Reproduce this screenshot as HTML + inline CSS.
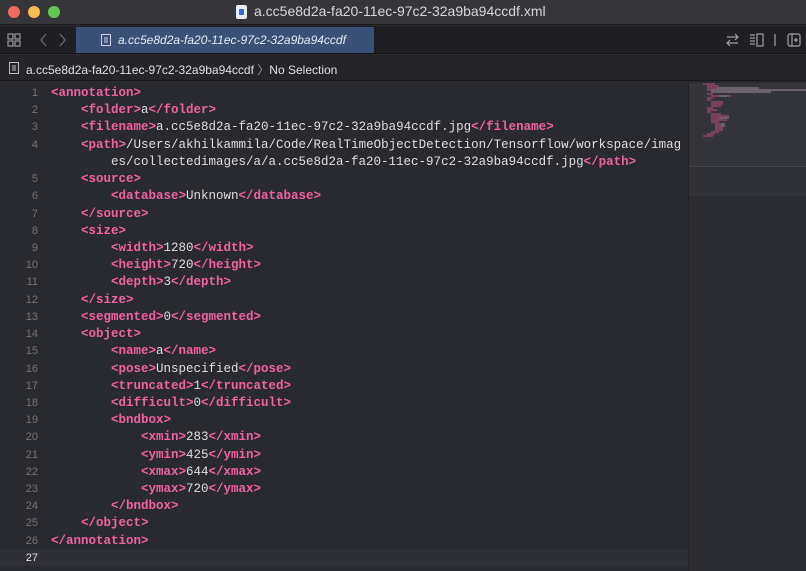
<!DOCTYPE html>
<html><head><meta charset="utf-8"><style>
*{margin:0;padding:0;box-sizing:border-box}
body{width:806px;height:571px;overflow:hidden;background:#292a30;font-family:"Liberation Sans",sans-serif;position:relative}
.title{position:absolute;left:0;top:0;width:806px;height:25px;background:#36363a;border-bottom:1px solid #1b1b1d}
.dot{position:absolute;top:6px;width:12px;height:12px;border-radius:50%}
.ttext{position:absolute;left:254px;top:3px;color:#d8d8d8;font-size:14px}
.tabbar{position:absolute;top:26px;left:0;width:806px;height:28px;background:#1f1f23;border-bottom:1px solid #151517}
.tab{position:absolute;left:76px;top:1px;width:298px;height:26px;background:#3a5076;color:#e6ebf2;font-size:12px;font-style:italic;padding:6px 0 0 42px}
.crumb{position:absolute;top:55px;left:0;width:806px;height:26px;background:#252529;border-bottom:1px solid #18181a;color:#e0e0e0;font-size:12px;padding:6px 0 0 26px}
.editor{position:absolute;top:83px;left:0;width:688px;height:488px;background:#292a30}
.mini{position:absolute;top:83px;left:688px;width:118px;height:488px;background:#2b2c31;border-left:1px solid #222226}
.code{position:absolute;top:0;left:0;font-family:"Liberation Mono",monospace;font-size:12.5px;line-height:17.22px;color:#dfdfe0}
.ln{position:absolute;left:0;width:38px;text-align:right;color:#747478;font-family:"Liberation Sans",sans-serif;font-size:11px}
.t{color:#f062a2;font-weight:bold}
.row{height:17.22px;position:relative}
.row .c{position:absolute;left:51px;white-space:pre}
</style></head><body>
<div class="title">
<div class="dot" style="left:8px;background:#ed6a5e"></div>
<div class="dot" style="left:28px;background:#f5bf4f"></div>
<div class="dot" style="left:48px;background:#61c554"></div>
<div style="position:absolute;left:236px;top:5px;width:11px;height:14px;background:#e8eef8;border-radius:2px"><div style="margin:4px 3px;width:5px;height:6px;background:#2f6fd6"></div></div>
<div class="ttext">a.cc5e8d2a-fa20-11ec-97c2-32a9ba94ccdf.xml</div>
</div>
<div class="tabbar">
<svg style="position:absolute;left:7px;top:7px" width="14" height="14" fill="none" stroke="#9a9a9e" stroke-width="1.2"><rect x="1" y="1" width="5" height="5"/><rect x="8" y="1" width="5" height="5"/><rect x="1" y="8" width="5" height="5"/><rect x="8" y="8" width="5" height="5"/></svg>
<svg style="position:absolute;left:38px;top:7px" width="30" height="14" fill="none" stroke="#6a6a6e" stroke-width="1.3"><path d="M8 1 L3 7 L8 13"/><path d="M22 1 L27 7 L22 13"/></svg>
<div class="tab"><svg style="position:absolute;left:25px;top:7px" width="10" height="12" fill="none" stroke="#c8d0dc" stroke-width="1"><rect x=".5" y=".5" width="9" height="11"/><path d="M3 4h4M3 6h4M3 8h4"/></svg>a.cc5e8d2a-fa20-11ec-97c2-32a9ba94ccdf</div>
<svg style="position:absolute;left:725px;top:7px" width="80" height="14" fill="none" stroke="#a0a0a4" stroke-width="1.2"><path d="M2 4h11M10 1l3 3-3 3M13 10H2M5 7l-3 3 3 3"/><path d="M25 2h5M25 5h5M25 8h5M25 11h5"/><rect x="32" y="1" width="6" height="12"/><path d="M50 1v12"/><rect x="63" y="1" width="12" height="12" rx="2"/><path d="M67 1v12M69 7h4M71 5v4"/></svg>
</div>
<div class="crumb"><svg style="position:absolute;left:9px;top:7px" width="10" height="12" fill="none" stroke="#c0c0c0" stroke-width="1"><rect x=".5" y=".5" width="9" height="11"/><path d="M3 4h4M3 6h4M3 8h4"/></svg>a.cc5e8d2a-fa20-11ec-97c2-32a9ba94ccdf <span style="color:#999">〉</span>No Selection</div>
<div class="editor">
<div style="position:absolute;left:0;top:466px;width:688px;height:17px;background:#2f3037"></div>
<div class="code" style="top:2px;width:688px">
<div class="row"><span class="ln">1</span><span class="c"><span class="t">&lt;annotation&gt;</span></span></div>
<div class="row"><span class="ln">2</span><span class="c">    <span class="t">&lt;folder&gt;</span>a<span class="t">&lt;/folder&gt;</span></span></div>
<div class="row"><span class="ln">3</span><span class="c">    <span class="t">&lt;filename&gt;</span>a.cc5e8d2a-fa20-11ec-97c2-32a9ba94ccdf.jpg<span class="t">&lt;/filename&gt;</span></span></div>
<div class="row"><span class="ln">4</span><span class="c">    <span class="t">&lt;path&gt;</span>/Users/akhilkammila/Code/RealTimeObjectDetection/Tensorflow/workspace/imag</span></div>
<div class="row"><span class="c">        es/collectedimages/a/a.cc5e8d2a-fa20-11ec-97c2-32a9ba94ccdf.jpg<span class="t">&lt;/path&gt;</span></span></div>
<div class="row"><span class="ln">5</span><span class="c">    <span class="t">&lt;source&gt;</span></span></div>
<div class="row"><span class="ln">6</span><span class="c">        <span class="t">&lt;database&gt;</span>Unknown<span class="t">&lt;/database&gt;</span></span></div>
<div class="row"><span class="ln">7</span><span class="c">    <span class="t">&lt;/source&gt;</span></span></div>
<div class="row"><span class="ln">8</span><span class="c">    <span class="t">&lt;size&gt;</span></span></div>
<div class="row"><span class="ln">9</span><span class="c">        <span class="t">&lt;width&gt;</span>1280<span class="t">&lt;/width&gt;</span></span></div>
<div class="row"><span class="ln">10</span><span class="c">        <span class="t">&lt;height&gt;</span>720<span class="t">&lt;/height&gt;</span></span></div>
<div class="row"><span class="ln">11</span><span class="c">        <span class="t">&lt;depth&gt;</span>3<span class="t">&lt;/depth&gt;</span></span></div>
<div class="row"><span class="ln">12</span><span class="c">    <span class="t">&lt;/size&gt;</span></span></div>
<div class="row"><span class="ln">13</span><span class="c">    <span class="t">&lt;segmented&gt;</span>0<span class="t">&lt;/segmented&gt;</span></span></div>
<div class="row"><span class="ln">14</span><span class="c">    <span class="t">&lt;object&gt;</span></span></div>
<div class="row"><span class="ln">15</span><span class="c">        <span class="t">&lt;name&gt;</span>a<span class="t">&lt;/name&gt;</span></span></div>
<div class="row"><span class="ln">16</span><span class="c">        <span class="t">&lt;pose&gt;</span>Unspecified<span class="t">&lt;/pose&gt;</span></span></div>
<div class="row"><span class="ln">17</span><span class="c">        <span class="t">&lt;truncated&gt;</span>1<span class="t">&lt;/truncated&gt;</span></span></div>
<div class="row"><span class="ln">18</span><span class="c">        <span class="t">&lt;difficult&gt;</span>0<span class="t">&lt;/difficult&gt;</span></span></div>
<div class="row"><span class="ln">19</span><span class="c">        <span class="t">&lt;bndbox&gt;</span></span></div>
<div class="row"><span class="ln">20</span><span class="c">            <span class="t">&lt;xmin&gt;</span>283<span class="t">&lt;/xmin&gt;</span></span></div>
<div class="row"><span class="ln">21</span><span class="c">            <span class="t">&lt;ymin&gt;</span>425<span class="t">&lt;/ymin&gt;</span></span></div>
<div class="row"><span class="ln">22</span><span class="c">            <span class="t">&lt;xmax&gt;</span>644<span class="t">&lt;/xmax&gt;</span></span></div>
<div class="row"><span class="ln">23</span><span class="c">            <span class="t">&lt;ymax&gt;</span>720<span class="t">&lt;/ymax&gt;</span></span></div>
<div class="row"><span class="ln">24</span><span class="c">        <span class="t">&lt;/bndbox&gt;</span></span></div>
<div class="row"><span class="ln">25</span><span class="c">    <span class="t">&lt;/object&gt;</span></span></div>
<div class="row"><span class="ln">26</span><span class="c"><span class="t">&lt;/annotation&gt;</span></span></div>
<div class="row"><span class="ln" style="color:#e0e0e0">27</span></div>
</div>
</div>
<div class="mini">
<div style="position:absolute;left:0;top:0;width:118px;height:83px;background:#34353b"></div>
<div style="position:absolute;left:0;top:83px;width:118px;height:30px;background:#313237;border-top:1px solid #45464c"></div>
<svg style="position:absolute;left:14px;top:0" width="104" height="80" stroke-width="1.2">
<path d="M0 1h12M4 3h12M4 5h10M14 5h42M4 7h4M8 7h96M8 9h60M4 11h6M8 13h10M14 13h14M4 15h6M4 17h4M8 19h12M8 21h12M8 23h10M4 25h6M4 27h10M4 29h4M8 31h10M8 33h18M8 35h18M8 37h16M8 39h8M12 41h8M12 43h8M12 45h8M12 47h8M8 49h8M4 51h8M0 53h10" stroke="#a04a72"/>
<path d="M14 5h42M8 7h96M8 9h60M16 13h8M16 35h10M18 41h4M18 43h4" stroke="#7a7a80"/>
</svg>
</div>
</body></html>
